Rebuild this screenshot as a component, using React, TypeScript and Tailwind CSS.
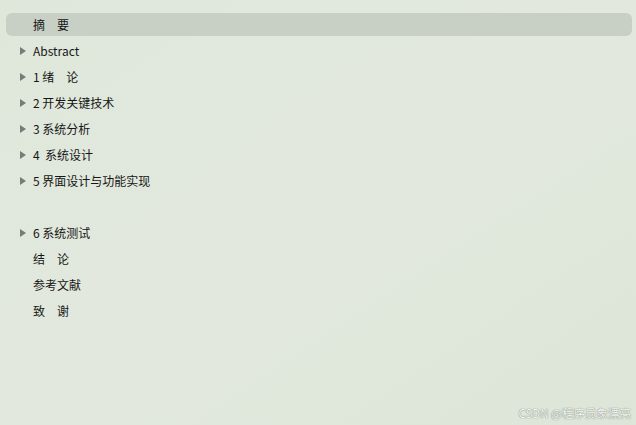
const items: { label: string; arrow: boolean; active?: boolean }[] = [
  { label: '摘　要', arrow: false, active: true },
  { label: 'Abstract', arrow: true },
  { label: '1 绪　论', arrow: true },
  { label: '2 开发关键技术', arrow: true },
  { label: '3 系统分析', arrow: true },
  { label: '4  系统设计', arrow: true },
  { label: '5 界面设计与功能实现', arrow: true },
  { label: '', arrow: false },
  { label: '6 系统测试', arrow: true },
  { label: '结　论', arrow: false },
  { label: '参考文献', arrow: false },
  { label: '致　谢', arrow: false },
]

export default function App() {
  return (
    <div
      className="relative w-[636px] h-[425px] overflow-hidden bg-gradient-to-br from-[#dfe7db] via-[#e2e8dd] to-[#dde5d8] text-[#161616]"
      style={{ fontFamily: '"Noto Sans CJK SC", "Noto Sans", sans-serif' }}
    >
      <ul className="flex flex-col gap-[3px] pt-[13px] pl-[6px] pr-[4px]">
        {items.map((item, i) => (
          <li
            key={i}
            className={
              'flex items-center h-[23px] rounded-[6px] text-[12px] leading-none whitespace-pre ' +
              (item.active ? 'bg-[#c8cfc4]' : '')
            }
          >
            <span className="flex w-[27px] pl-[14px] shrink-0">
              {item.arrow && (
                <svg width="6" height="8" viewBox="0 0 6 8">
                  <path d="M0 0 L6 4 L0 8 Z" fill="#7a7a7a" />
                </svg>
              )}
            </span>
            <span>{item.label}</span>
          </li>
        ))}
      </ul>
      <div className="absolute right-[5px] bottom-[6px] text-[11.5px] leading-none text-[#f6f7f4] [text-shadow:0_0_1px_#7f897f,0_0_1px_#7f897f]">
        CSDN @程序员象漂亮
      </div>
    </div>
  )
}
